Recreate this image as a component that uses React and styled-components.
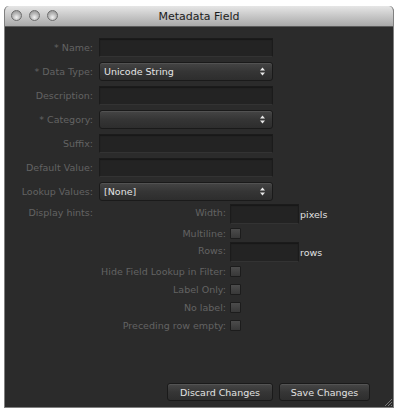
import styled, { createGlobalStyle } from "styled-components";

const GlobalStyle = createGlobalStyle`
  html, body {
    margin: 0;
    padding: 0;
    background: #ffffff;
  }
  body {
    font-family: "DejaVu Sans", "Liberation Sans", sans-serif;
  }
`;

const Page = styled.div`
  width: 401px;
  height: 410px;
  padding: 6px 0 0 4px;
  box-sizing: border-box;
`;

const Window = styled.div`
  position: relative;
  width: 390px;
  height: 402px;
  box-sizing: border-box;
  display: flex;
  flex-direction: column;
  background: #2b2b2b;
  border: 1px solid #808080;
  border-top: none;
  border-radius: 5px 5px 0 0;
  overflow: hidden;
`;

const TitleBar = styled.div`
  position: relative;
  height: 20px;
  flex: none;
  display: flex;
  align-items: center;
  justify-content: center;
  background: linear-gradient(#e6e6e6, #c4c4c4 55%, #a9a9a9);
  border-bottom: 1px solid #5a5a5a;
  font-size: 11px;
  color: #1c1c1c;
`;

const Lights = styled.div`
  position: absolute;
  left: 6px;
  top: 4px;
  display: flex;
  gap: 7px;
`;

const Light = styled.span`
  width: 11px;
  height: 11px;
  border-radius: 50%;
  box-sizing: border-box;
  border: 1px solid #6e6e6e;
  background: radial-gradient(circle at 50% 70%, #f2f2f2 0, #bdbdbd 45%, #8c8c8c 100%);
`;

const Body = styled.div`
  flex: 1;
  display: flex;
  flex-direction: column;
  padding-top: 11px;
`;

const Form = styled.div`
  display: grid;
  grid-template-columns: 88px 174px;
  column-gap: 6px;
  row-gap: 5px;
  grid-auto-rows: 19px;
`;

const Label = styled.label`
  font-size: 9.5px;
  color: #636363;
  text-align: right;
  white-space: nowrap;
  padding-top: ${(p) => (p.$top ? "3px" : "0")};
  align-self: ${(p) => (p.$top ? "start" : "center")};
`;

const TextField = styled.div`
  box-sizing: border-box;
  height: ${(p) => p.$h || 19}px;
  width: ${(p) => (p.$w ? `${p.$w}px` : "auto")};
  background: #232323;
  border: 1px solid #1b1b1b;
  border-bottom-color: #333333;
  box-shadow: inset 0 1px 1px rgba(0, 0, 0, 0.35);
`;

const Popup = styled.div`
  position: relative;
  box-sizing: border-box;
  height: 19px;
  display: flex;
  align-items: center;
  padding-left: 4px;
  border-radius: 3px;
  border: 1px solid #1a1a1a;
  background: linear-gradient(#454545, #353535 50%, #2d2d2d);
  box-shadow: inset 0 1px 0 rgba(255, 255, 255, 0.08);
  font-size: 9.5px;
  color: #e4e4e4;
`;

const Arrows = styled.svg`
  position: absolute;
  right: 7px;
  top: 4px;
`;

const Hints = styled.div`
  display: grid;
  grid-template-columns: 88px auto;
  column-gap: 6px;
  margin-top: 3px;
`;

const HintGrid = styled.div`
  display: grid;
  grid-template-columns: 127px auto;
  grid-template-rows: 21px 17px 21px 17px 18px 18px 18px;
  column-gap: 4px;
`;

const Control = styled.div`
  display: flex;
  align-items: ${(p) => (p.$start ? "flex-start" : "center")};
  gap: 1px;
`;

const Unit = styled.span`
  font-size: 9.5px;
  color: #e0e0e0;
  padding-top: 5px;
`;

const Check = styled.span`
  width: 11px;
  height: 11px;
  box-sizing: border-box;
  border: 1px solid #1c1c1c;
  border-radius: 1px;
  background: linear-gradient(#4c4c4c, #383838);
`;

const Footer = styled.div`
  margin-top: auto;
  display: flex;
  justify-content: flex-end;
  gap: 6px;
  padding: 0 23px 6px 0;
`;

const Button = styled.button`
  box-sizing: border-box;
  width: ${(p) => p.$w}px;
  height: 18px;
  padding: 0;
  border-radius: 3px;
  border: 1px solid #1a1a1a;
  background: linear-gradient(#474747, #363636 50%, #2e2e2e);
  box-shadow: inset 0 1px 0 rgba(255, 255, 255, 0.08);
  font-family: "DejaVu Sans", "Liberation Sans", sans-serif;
  font-size: 9.5px;
  color: #e2e2e2;
`;

const Grip = styled.svg`
  position: absolute;
  right: 1px;
  bottom: 1px;
`;

const PopupArrows = () => (
  <Arrows width="5" height="9" viewBox="0 0 5 9">
    <path d="M2.5 0.5 L5 3.5 L0 3.5 Z" fill="#e8e8e8" />
    <path d="M2.5 8.5 L5 5.5 L0 5.5 Z" fill="#e8e8e8" />
  </Arrows>
);

const fields = [
  { label: "* Name:", type: "text" },
  { label: "* Data Type:", type: "popup", value: "Unicode String" },
  { label: "Description:", type: "text" },
  { label: "* Category:", type: "popup", value: "" },
  { label: "Suffix:", type: "text" },
  { label: "Default Value:", type: "text" },
  { label: "Lookup Values:", type: "popup", value: "[None]" },
];

const checks = [
  "Hide Field Lookup in Filter:",
  "Label Only:",
  "No label:",
  "Preceding row empty:",
];

const App = () => {
  return (
    <Page>
      <GlobalStyle />
      <Window>
        <TitleBar>
          <Lights>
            <Light />
            <Light />
            <Light />
          </Lights>
          Metadata Field
        </TitleBar>
        <Body>
          <Form>
            {fields.map((f) => [
              <Label key={f.label + "l"}>{f.label}</Label>,
              f.type === "text" ? (
                <TextField key={f.label + "f"} />
              ) : (
                <Popup key={f.label + "f"}>
                  {f.value}
                  <PopupArrows />
                </Popup>
              ),
            ])}
          </Form>
          <Hints>
            <Label $top>Display hints:</Label>
            <HintGrid>
              <Label $top>Width:</Label>
              <Control $start>
                <TextField $w={69} $h={20} />
                <Unit>pixels</Unit>
              </Control>
              <Label>Multiline:</Label>
              <Control>
                <Check />
              </Control>
              <Label $top>Rows:</Label>
              <Control $start>
                <TextField $w={69} $h={20} />
                <Unit>rows</Unit>
              </Control>
              {checks.map((c) => [
                <Label key={c + "l"}>{c}</Label>,
                <Control key={c + "c"}>
                  <Check />
                </Control>,
              ])}
            </HintGrid>
          </Hints>
          <Footer>
            <Button $w={106}>Discard Changes</Button>
            <Button $w={91}>Save Changes</Button>
          </Footer>
        </Body>
        <Grip width="8" height="8" viewBox="0 0 8 8">
          <path d="M8 1 L1 8 M8 4 L4 8 M8 7 L7 8" stroke="#777" strokeWidth="1" />
        </Grip>
      </Window>
    </Page>
  );
};

export default App;
